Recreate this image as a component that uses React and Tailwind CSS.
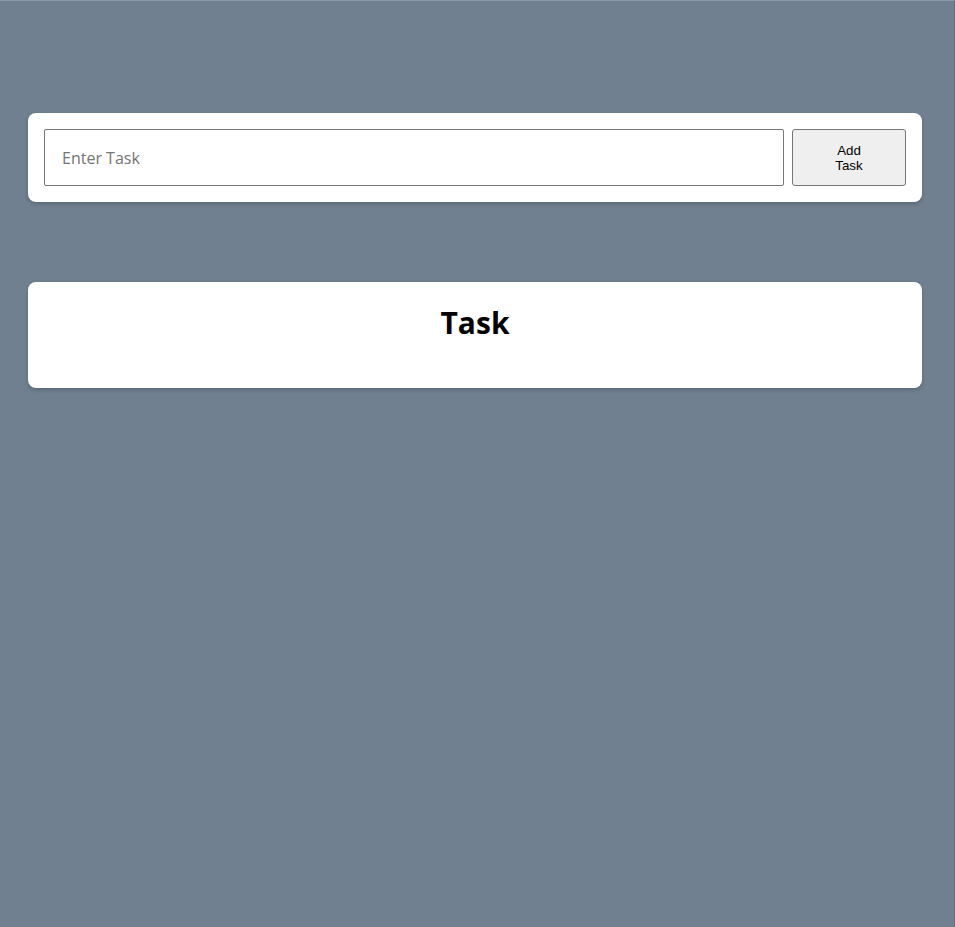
import React, { useState } from 'react';

export default function App() {
  const [task, setTask] = useState('');
  const [tasks, setTasks] = useState([]);

  const addTask = () => {
    if (!task.trim()) return;
    setTasks(prev => [...prev, task.trim()]);
    setTask('');
  };

  return (
    <div className="min-h-[927px] bg-[#708090] border-t border-t-[#8a98a8] border-r border-r-[#5f6d7c] pl-[28px] pr-[32px] pt-[112px] pb-10" style={{ fontFamily: '"Open Sans", "Noto Sans", sans-serif' }}>
      {/* Input card */}
      <div className="bg-white rounded-lg shadow-[0_2px_4px_rgba(0,0,0,0.2)] p-4 flex gap-2">
        <input
          value={task}
          onChange={(e) => setTask(e.target.value)}
          placeholder="Enter Task"
          className="flex-1 h-[57px] border border-[#767676] rounded-[2px] px-[17px] text-base text-black placeholder:text-[#757575] outline-none"
        />
        <button
          onClick={addTask}
          className="w-[114px] h-[57px] bg-[#efefef] border border-[#767676] rounded-[3px] text-[13.33px] leading-[15px] text-black px-[40px]"
          style={{ fontFamily: '"Liberation Sans", Arial, sans-serif' }}
        >
          Add Task
        </button>
      </div>

      {/* Task list */}
      <div className="mt-[80px] bg-white rounded-lg shadow-[0_2px_4px_rgba(0,0,0,0.2)] pt-[18px] pb-[43px] px-4">
        <h2 className="text-center text-[30px] leading-[45px] font-bold text-black">Task</h2>
        {tasks.map((t, idx) => (
          <p key={idx} className="text-center text-base">{t}</p>
        ))}
      </div>
    </div>
  );
}
